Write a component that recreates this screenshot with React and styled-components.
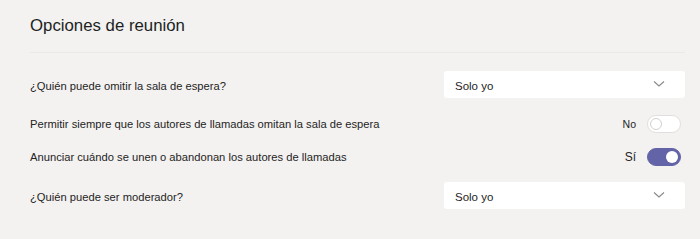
import React, { useState } from 'react';
import styled, { createGlobalStyle } from 'styled-components';

const GlobalStyle = createGlobalStyle`
  html, body {
    margin: 0;
    padding: 0;
    background: #f3f2f1;
  }
  body {
    font-family: 'Segoe UI', 'Liberation Sans', Arial, sans-serif;
    color: #252423;
  }
`;

const Page = styled.div`
  width: 700px;
  height: 239px;
  box-sizing: border-box;
  padding: 0 15px 0 30px;
  background: #f3f2f1;
`;

const Header = styled.div`
  height: 53px;
  display: flex;
  align-items: center;
  border-bottom: 1px solid #ebe9e7;
  box-sizing: border-box;
  padding-bottom: 1px;
`;

const Title = styled.h1`
  margin: 0;
  font-size: 16.8px;
  font-weight: 400;
  color: #201f1e;
`;

const List = styled.div`
  padding-top: 17px;
  display: flex;
  flex-direction: column;
`;

const Row = styled.div`
  display: flex;
  align-items: center;
  justify-content: space-between;
  height: ${(p) => (p.$tall ? '28px' : '20px')};
  margin-bottom: ${(p) => p.$gap || 0}px;
`;

const Label = styled.span`
  font-size: 11.2px;
  color: #252423;
  padding-top: ${(p) => (p.$shift ? '4px' : '0')};
`;

const Select = styled.div`
  width: 241px;
  height: 27px;
  background: #ffffff;
  border-radius: 3px;
  display: flex;
  align-items: center;
  justify-content: space-between;
  padding: 3px 20px 0 11px;
  box-sizing: border-box;
  font-size: 11.5px;
  color: #252423;

  svg {
    margin-top: -4px;
  }
`;

const ToggleWrap = styled.div`
  display: flex;
  align-items: center;
  gap: 11px;
  padding-right: 4px;
  font-size: ${(p) => (p.$on ? '12px' : '10.5px')};
`;

const Track = styled.button`
  width: 34px;
  height: 18px;
  border-radius: 9px;
  padding: 0;
  box-sizing: border-box;
  border: 1px solid ${(p) => (p.$on ? '#6264a7' : '#e1dfdd')};
  background: ${(p) => (p.$on ? '#6264a7' : '#ffffff')};
  display: flex;
  align-items: center;
  justify-content: ${(p) => (p.$on ? 'flex-end' : 'flex-start')};
  cursor: pointer;
`;

const Knob = styled.span`
  width: 12px;
  height: 12px;
  border-radius: 50%;
  margin: 0 2px;
  box-sizing: border-box;
  background: ${(p) => (p.$on ? '#ffffff' : 'transparent')};
  border: ${(p) => (p.$on ? 'none' : '1px solid #d2d0ce')};
`;

const Chevron = () => (
  <svg width="12" height="8" viewBox="0 0 12 8">
    <path d="M1 1.5 L6 6 L11 1.5" fill="none" stroke="#8a8886" strokeWidth="1.1" />
  </svg>
);

const Toggle = ({ on, onClick }) => (
  <ToggleWrap $on={on}>
    <span>{on ? 'Sí' : 'No'}</span>
    <Track $on={on} onClick={onClick}>
      <Knob $on={on} />
    </Track>
  </ToggleWrap>
);

export default function App() {
  const [allowCallers, setAllowCallers] = useState(false);
  const [announce, setAnnounce] = useState(true);

  return (
    <>
      <GlobalStyle />
      <Page>
        <Header>
          <Title>Opciones de reunión</Title>
        </Header>
        <List>
          <Row $tall $gap={16}>
            <Label $shift>¿Quién puede omitir la sala de espera?</Label>
            <Select>
              <span>Solo yo</span>
              <Chevron />
            </Select>
          </Row>
          <Row $gap={13}>
            <Label>Permitir siempre que los autores de llamadas omitan la sala de espera</Label>
            <Toggle on={allowCallers} onClick={() => setAllowCallers(!allowCallers)} />
          </Row>
          <Row $gap={14}>
            <Label>Anunciar cuándo se unen o abandonan los autores de llamadas</Label>
            <Toggle on={announce} onClick={() => setAnnounce(!announce)} />
          </Row>
          <Row $tall>
            <Label $shift>¿Quién puede ser moderador?</Label>
            <Select>
              <span>Solo yo</span>
              <Chevron />
            </Select>
          </Row>
        </List>
      </Page>
    </>
  );
}
